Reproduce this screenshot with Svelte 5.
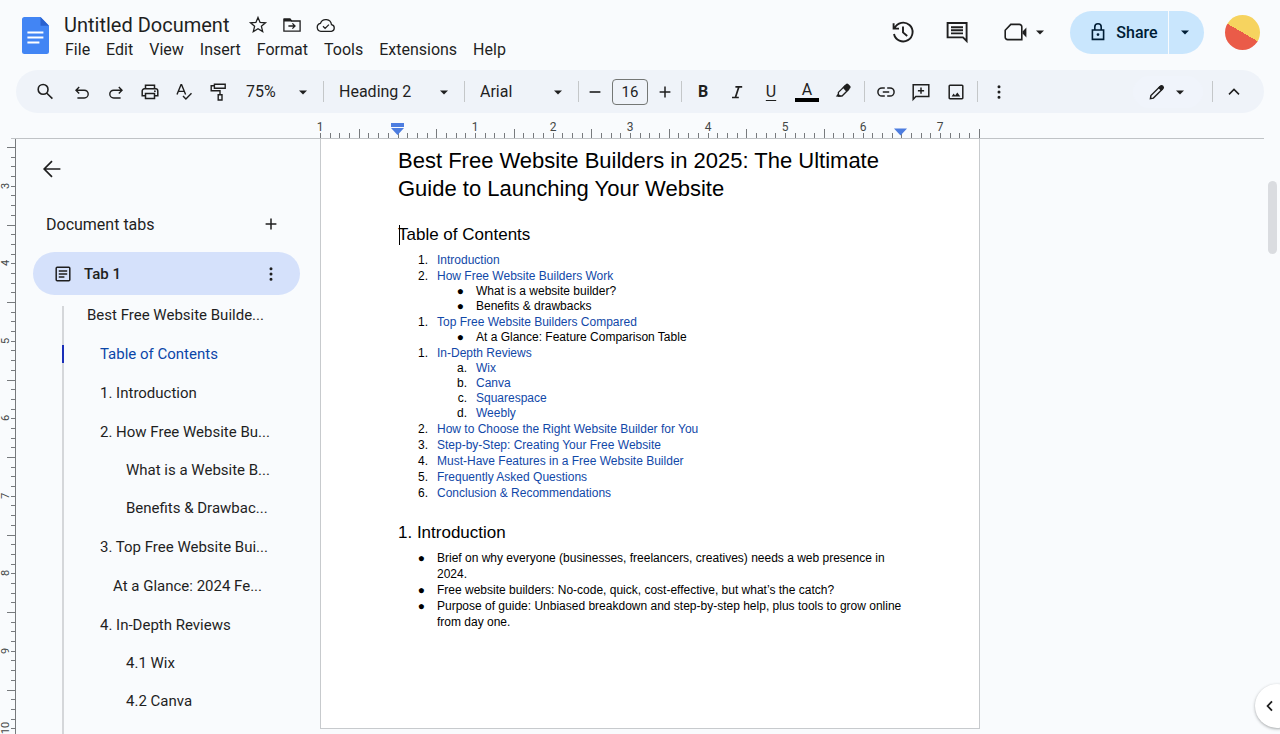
<script>
	let title = $state('Untitled Document');
	let fontSize = $state(16);
	let leftHeight = $state(600);

	const menus = ['File', 'Edit', 'View', 'Insert', 'Format', 'Tools', 'Extensions', 'Help'];

	// stroked and filled parts of each icon
	const icons = {
		star: { size: 20, line: 'M10 2.4l2.1 5 5.4.4-4.1 3.5 1.3 5.3L10 13.8l-4.7 2.8 1.3-5.3-4.1-3.5 5.4-.4z', width: 1.3 },
		move: { size: 20, line: 'M1.9 4.2v12h16.2V6H9.7L8 4.2zM6.4 11h6.4M10.4 8.4l2.6 2.6-2.6 2.6', fill: 'M1.9 3.6h6.4L10 6.4H1.9z', width: 1.3 },
		cloud: { size: 20, line: 'M5 16.4a4.1 4.1 0 0 1-.5-8.1 5.7 5.7 0 0 1 11 1.4 3.4 3.4 0 0 1-.1 6.7zM7 11.3l2.1 2.1 3.8-3.8', width: 1.3 },
		history: { size: 24, line: 'M3.6 8.2A9.4 9.4 0 1 1 3 14M2.6 3.2v5.4H8M12 6.6v5.8l4.2 3.6', width: 1.9 },
		comment: { size: 24, line: 'M2.6 3h19v18l-3.6-3.6H2.6zM6 7.2h12M6 10.3h12M6 13.4h12', width: 1.9 },
		video: { size: 24, line: 'M7.8 4.4h8.6a2.4 2.4 0 0 1 2.4 2.4v12.8H4.6a2.4 2.4 0 0 1-2.4-2.4v-7z', fill: 'M19.6 11.4l3.8-4v10l-3.8-4z', width: 1.6 },
		lock: { size: 20, line: 'M4.4 8h11.2v9.4H4.4zM6.8 8V5a3.2 3.2 0 0 1 6.4 0v3', fill: 'M8.6 12.6a1.4 1.4 0 1 0 2.800 0a1.400 1.400 0 1 0-2.800 0', width: 1.6 },
		search: { size: 20, line: 'M3.2 7.4a4.9 4.9 0 1 0 9.8 0a4.9 4.9 0 1 0-9.8 0M11.6 11l5.8 5.6', width: 1.6 },
		undo: { size: 20, line: 'M7.2 5L4 8.2l3.2 3.2M4.3 8.2h8a3.9 3.9 0 0 1 0 7.8H5.4', width: 1.4 },
		redo: { size: 20, line: 'M12.8 5L16 8.2l-3.2 3.2M15.7 8.2h-8a3.9 3.9 0 0 0 0 7.8h6.9', width: 1.4 },
		print: { size: 20, line: 'M5.5 6.8V3.2h9v3.6M5.5 13.8H2.2V9a2.2 2.2 0 0 1 2.2-2.2h11.2A2.2 2.2 0 0 1 17.8 9v4.8h-3.3M5.5 11.4h9v5.2h-9z', fill: 'M14 9.2a.9.9 0 1 0 1.8 0a.9.9 0 1 0-1.8 0' },
		spell: { size: 20, line: 'M3 12.4L7 2.8h.6l4 9.6M4.4 9.4h5.8M9 14l2.9 3 5.6-5.7', width: 1.4 },
		paint: { size: 20, line: 'M6.4 2.2h10.8v4H6.4zM6.4 3.8H3.2v5h8.8v4M10.2 12.8h3.8v5.2h-3.8z', width: 1.4 },
		minus: { size: 20, line: 'M4.6 10h10.8', width: 1.6 },
		plus: { size: 20, line: 'M4.6 10h10.8M10 4.6v10.8' },
		italic: { size: 20, line: 'M8.4 4.9h6.8M5 15.5h6.8M11.8 4.9L8.4 15.5', width: 1.7 },
		pen: { size: 20, line: 'M5.4 10.4l6.6-6.6 3.6 3.6-6.6 6.6H5.4z', fill: 'M9.6 5.6L13 2a1.6 1.6 0 0 1 2.2 0l2 2a1.6 1.6 0 0 1 0 2.2l-3.8 3.6zM2.8 14.600l2.400-3.200 2.800 2.800-.6.6z', width: 1.3 },
		link: { size: 20, line: 'M8.8 5.9H6a4.1 4.1 0 0 0 0 8.2h2.8M11.2 5.9H14a4.1 4.1 0 0 1 0 8.2h-2.8M6.8 10h6.4' },
		addComment: { size: 20, line: 'M2.2 17.4V2.8h15.6v11.8H4.8zM10 5.6v6.2M6.9 8.7h6.2' },
		image: { size: 20, line: 'M4 3.2h12a.8.8 0 0 1 .8.8v12a.8.8 0 0 1-.8.8H4a.8.8 0 0 1-.8-.8V4a.8.8 0 0 1 .8-.8z', fill: 'M5.6 14.4l2-2.8 1.5 1.8 2.2-3 3 4z' },
		dots: { size: 20, fill: 'M8.5 4.800a1.500 1.500 0 1 0 3 0a1.500 1.500 0 1 0-3 0M8.500 10a1.500 1.500 0 1 0 3 0a1.500 1.500 0 1 0-3 0M8.500 15.200a1.500 1.500 0 1 0 3 0a1.500 1.500 0 1 0-3 0' },
		pencil: { size: 20, line: 'M3.4 16.6l.5-3L13 4.5a1.8 1.8 0 0 1 2.5 2.5l-9.1 9.1z', fill: 'M11 5.8l2-2.1a2.3 2.3 0 0 1 3.3 3.3l-2.1 2z', width: 1.4 },
		up: { size: 20, line: 'M5 12.4l5-5 5 5' },
		left: { size: 20, line: 'M12 5.4L7.6 10l4.4 4.6', width: 1.8 },
		back: { size: 20, line: 'M18.4 10H2.4M10 2.2L2.2 10l7.8 7.8', width: 1.7 },
		doc: { size: 20, line: 'M4.2 3.2h11.6a1 1 0 0 1 1 1v11.6a1 1 0 0 1-1 1H4.2a1 1 0 0 1-1-1V4.2a1 1 0 0 1 1-1zM5.8 7h8.4M5.8 10h8.4M5.8 13h5.6' },
		caret: { size: 10, fill: 'M1 3.5h8L5 7.5z' }
	};

	const outline = [
		{ text: 'Best Free Website Builde...', level: 0 },
		{ text: 'Table of Contents', level: 1, active: true },
		{ text: '1. Introduction', level: 1 },
		{ text: '2. How Free Website Bu...', level: 1 },
		{ text: 'What is a Website B...', level: 3 },
		{ text: 'Benefits & Drawbac...', level: 3 },
		{ text: '3. Top Free Website Bui...', level: 1 },
		{ text: 'At a Glance: 2024 Fe...', level: 2 },
		{ text: '4. In-Depth Reviews', level: 1 },
		{ text: '4.1 Wix', level: 3 },
		{ text: '4.2 Canva', level: 3 }
	];

	const contents = [
		{ mark: '1.', text: 'Introduction' },
		{ mark: '2.', text: 'How Free Website Builders Work', plain: ['What is a website builder?', 'Benefits & drawbacks'] },
		{ mark: '1.', text: 'Top Free Website Builders Compared', plain: ['At a Glance: Feature Comparison Table'] },
		{ mark: '1.', text: 'In-Depth Reviews', links: ['Wix', 'Canva', 'Squarespace', 'Weebly'] },
		{ mark: '2.', text: 'How to Choose the Right Website Builder for You' },
		{ mark: '3.', text: 'Step-by-Step: Creating Your Free Website' },
		{ mark: '4.', text: 'Must-Have Features in a Free Website Builder' },
		{ mark: '5.', text: 'Frequently Asked Questions' },
		{ mark: '6.', text: 'Conclusion & Recommendations' }
	];

	const intro = [
		'Brief on why everyone (businesses, freelancers, creatives) needs a web presence in 2024.',
		'Free website builders: No-code, quick, cost-effective, but what’s the catch?',
		'Purpose of guide: Unbiased breakdown and step-by-step help, plus tools to grow online from day one.'
	];

	// rulers: eight ticks to the inch, the half inch is taller
	const INCH = 77.5;
	const across = Array.from({ length: 69 }, (_, i) => ({
		at: Math.round((i * INCH) / 8),
		long: i % 8 === 4,
		label: i % 8 === 0 && i !== 8 ? Math.abs(i / 8 - 1) : ''
	}));
	const down = $derived(
		Array.from({ length: Math.ceil((leftHeight * 8) / INCH) }, (_, i) => ({
			at: Math.round(9 + (i * INCH) / 8),
			long: i % 8 === 0,
			label: i % 8 === 4 ? 3 + (i - 4) / 8 : ''
		}))
	);
</script>

{#snippet icon(name)}
	{@const i = icons[name]}
	<svg width={i.size} height={i.size} viewBox="0 0 {i.size} {i.size}" aria-hidden="true">
		{#if i.line}<path d={i.line} fill="none" stroke="currentColor" stroke-width={i.width ?? 1.5} />{/if}
		{#if i.fill}<path d={i.fill} fill="currentColor" />{/if}
	</svg>
{/snippet}

{#snippet tool(name, label)}
	<button class="tool" aria-label={label}>{@render icon(name)}</button>
{/snippet}

<div class="app">
	<header>
		<svg class="logo" width="27" height="37" viewBox="0 0 27 37" aria-hidden="true">
			<path d="M2.5 0H18.5L27 8.8v25.7a2.5 2.5 0 0 1-2.5 2.5h-22A2.5 2.5 0 0 1 0 34.5v-32A2.5 2.5 0 0 1 2.5 0z" fill="#4285f4" />
			<path d="M18.5 0v8.8H27z" fill="#2a62d0" />
			<path d="M5.4 15.4h16M5.4 20.4h16M5.4 25.4h12" stroke="#fff" stroke-width="2" />
		</svg>
		<div class="heading">
			<div class="title-row">
				<input class="title" aria-label="Rename" bind:value={title} />
				<button aria-label="Star">{@render icon('star')}</button>
				<button aria-label="Move">{@render icon('move')}</button>
				<button aria-label="See document status">{@render icon('cloud')}</button>
			</div>
			<nav class="menus">
				{#each menus as menu}
					<button>{menu}</button>
				{/each}
			</nav>
		</div>
		<div class="actions">
			<button class="action" aria-label="Version history">{@render icon('history')}</button>
			<button class="action" aria-label="Comments">{@render icon('comment')}</button>
			<button class="meet" aria-label="Join a call">{@render icon('video')}{@render icon('caret')}</button>
			<div class="share">
				<button class="share-main">{@render icon('lock')}Share</button>
				<button class="share-more" aria-label="Share options">{@render icon('caret')}</button>
			</div>
			<button class="avatar" aria-label="Account"></button>
		</div>
	</header>

	<div class="toolbar" role="toolbar" aria-label="Formatting">
		<div class="group search">{@render tool('search', 'Search the menus')}</div>
		<div class="group">
			{@render tool('undo', 'Undo')}
			{@render tool('redo', 'Redo')}
			{@render tool('print', 'Print')}
			{@render tool('spell', 'Spelling and grammar check')}
			{@render tool('paint', 'Paint format')}
		</div>
		<label class="select zoom">
			<select aria-label="Zoom"><option>75%</option><option>100%</option></select>
			{@render icon('caret')}
		</label>
		<span class="divider"></span>
		<label class="select styles">
			<select aria-label="Styles"><option>Heading 2</option><option>Normal text</option></select>
			{@render icon('caret')}
		</label>
		<span class="divider"></span>
		<label class="select fonts">
			<select aria-label="Font"><option>Arial</option><option>Roboto</option></select>
			{@render icon('caret')}
		</label>
		<span class="divider"></span>
		<div class="group size">
			<button aria-label="Decrease font size" onclick={() => fontSize--}>{@render icon('minus')}</button>
			<input aria-label="Font size" bind:value={fontSize} />
			<button aria-label="Increase font size" onclick={() => fontSize++}>{@render icon('plus')}</button>
		</div>
		<span class="divider"></span>
		<div class="group">
			<button class="tool bold" aria-label="Bold">B</button>
			{@render tool('italic', 'Italic')}
			<button class="tool underline" aria-label="Underline">U</button>
			<button class="tool color" aria-label="Text color"><span>A</span></button>
			{@render tool('pen', 'Highlight color')}
		</div>
		<span class="divider"></span>
		<div class="group spaced">
			{@render tool('link', 'Insert link')}
			{@render tool('addComment', 'Add comment')}
			{@render tool('image', 'Insert image')}
		</div>
		<span class="divider"></span>
		{@render tool('dots', 'More')}
		<button class="mode" aria-label="Editing mode">{@render icon('pencil')}{@render icon('caret')}</button>
		<span class="divider"></span>
		{@render tool('up', 'Hide the menus')}
	</div>

	<div class="ruler columns">
		<svg class="across" width="660" height="25" aria-hidden="true">
			{#each across as tick}
				<path d="M{tick.at + 0.5} {tick.long ? 16 : 20}V25" stroke="#777a7d" />
				<text x={tick.at} y="18" text-anchor="middle">{tick.label}</text>
			{/each}
			<path d="M71 10h13v4H71zM71 15h13l-6.5 7z" fill="#4d7de0" />
			<path d="M574 15.5h13l-6.5 7z" fill="#4d7de0" />
		</svg>
	</div>

	<main class="columns">
		<div class="left" bind:clientHeight={leftHeight}>
			<svg class="down" width="16" height="100%" aria-hidden="true">
				{#each down as tick}
					<path d="M{tick.long ? 7 : 11} {tick.at - 0.5}H15" stroke="#777a7d" />
					{#if tick.label}
						<text transform="translate(9 {tick.at - 1}) rotate(-90)" text-anchor="middle">{tick.label}</text>
					{/if}
				{/each}
				<path d="M15.5 0V{leftHeight}" stroke="#777a7d" />
			</svg>
			<aside>
				<button class="back" aria-label="Close tabs and outlines">{@render icon('back')}</button>
				<div class="tabs-head">
					<h2>Document tabs</h2>
					<button aria-label="Add tab">{@render icon('plus')}</button>
				</div>
				<div class="tab">
					<button class="tab-name">{@render icon('doc')}Tab 1</button>
					<button aria-label="Tab options">{@render icon('dots')}</button>
				</div>
				<ul class="outline">
					{#each outline as item}
						<li class="level-{item.level}" class:active={item.active}><a href="#doc">{item.text}</a></li>
					{/each}
				</ul>
			</aside>
		</div>

		<article class="page" id="doc">
			<h1>Best Free Website Builders in 2025: The Ultimate Guide to Launching Your Website</h1>
			<h2 class="cursor">Table of Contents</h2>
			<ul class="list">
				{#each contents as item}
					<li>
						<span class="mark">{item.mark}</span>
						<a href="#doc">{item.text}</a>
						{#if item.plain}
							<ul>
								{#each item.plain as text}
									<li><span class="mark dot">●</span><span>{text}</span></li>
								{/each}
							</ul>
						{/if}
						{#if item.links}
							<ul>
								{#each item.links as text, n}
									<li><span class="mark">{'abcd'[n]}.</span><a href="#doc">{text}</a></li>
								{/each}
							</ul>
						{/if}
					</li>
				{/each}
			</ul>
			<h2>1. Introduction</h2>
			<ul class="list">
				{#each intro as text}
					<li><span class="mark dot">●</span><span>{text}</span></li>
				{/each}
			</ul>
		</article>
	</main>

	<div class="scrollbar"></div>
	<button class="side-panel" aria-label="Show side panel">{@render icon('left')}</button>
</div>

<style>
	:global(body) {
		background: #f9fbfd;
	}

	.app {
		position: relative;
		display: flex;
		flex-direction: column;
		height: 100vh;
		overflow: hidden;
		font-family: Roboto, sans-serif;
		font-size: 16px;
		color: #1f1f1f;
	}

	button, input, select {
		font: inherit;
		color: inherit;
		background: none;
		border: 0;
		padding: 0;
		margin: 0;
	}

	button {
		display: flex;
		align-items: center;
		justify-content: center;
		cursor: pointer;
	}

	svg {
		display: block;
		flex: none;
	}

	ul {
		list-style: none;
		margin: 0;
		padding: 0;
	}

	h1, h2 {
		margin: 0;
		font-weight: 400;
	}

	a {
		color: inherit;
		text-decoration: none;
	}

	header {
		display: flex;
		align-items: flex-start;
		height: 70px;
		padding: 0 20px 0 22px;
		box-sizing: border-box;
	}

	.logo {
		margin-top: 17px;
	}

	.heading {
		margin: 12px 0 0 8px;
	}

	.title-row {
		display: flex;
		align-items: center;
		gap: 14px;
		height: 25px;
		padding-left: 7px;
	}

	.title {
		width: 170px;
		font-size: 20px;
	}

	.menus {
		display: flex;
		height: 24px;
	}

	.menus button {
		padding: 0 8px;
	}

	.actions {
		display: flex;
		align-items: center;
		margin: 10px 0 0 auto;
		height: 44px;
	}

	.action {
		width: 54px;
		height: 40px;
	}

	.meet {
		gap: 8px;
		width: 86px;
		height: 40px;
		padding-right: 6px;
		box-sizing: border-box;
	}

	.share {
		display: flex;
		gap: 1px;
		height: 43px;
		margin-right: 21px;
		font-weight: 500;
		color: #001d35;
	}

	.share button {
		background: #c9e6fd;
	}

	.share-main {
		gap: 8px;
		width: 98px;
		padding: 0 0 0 8px;
		border-radius: 22px 0 0 22px;
	}

	.share-more {
		width: 35px;
		padding-right: 3px;
		box-sizing: border-box;
		border-radius: 0 22px 22px 0;
	}

	.avatar {
		width: 35px;
		height: 35px;
		border-radius: 50%;
		background: linear-gradient(210deg, #f6d35f 50%, #ea5b48 50%);
	}

	.toolbar {
		display: flex;
		align-items: center;
		height: 43px;
		margin: 0 16px;
		padding: 0 13px 0 12px;
		border-radius: 22px;
		background: #eff3f9;
	}

	.group {
		display: flex;
		align-items: center;
	}

	.spaced {
		gap: 1px;
	}

	.search {
		margin-right: 3px;
	}

	.tool {
		width: 34px;
		height: 34px;
	}

	.divider {
		width: 1px;
		height: 21px;
		margin: 0 4px;
		background: #c4c7c9;
	}

	.select {
		position: relative;
		display: flex;
		align-items: center;
	}

	.select select {
		appearance: none;
		width: 100%;
		height: 30px;
		padding-left: 11px;
	}

	.select :global(svg) {
		position: absolute;
		right: 11px;
		pointer-events: none;
	}

	.zoom {
		width: 84px;
	}

	.styles {
		width: 132px;
	}

	.fonts {
		width: 105px;
	}

	.size {
		gap: 5px;
	}

	.size button {
		width: 24px;
		height: 30px;
	}

	.size input {
		width: 36px;
		height: 26px;
		box-sizing: border-box;
		border: 1px solid #747775;
		border-radius: 4px;
		text-align: center;
		font-size: 15px;
	}

	.bold {
		font-weight: 700;
	}

	.underline {
		text-decoration: underline;
		text-underline-offset: 3px;
	}

	.color {
		width: 38px;
	}

	.color span {
		width: 24px;
		line-height: 17px;
		border-bottom: 4px solid #000;
	}

	.mode {
		gap: 8px;
		width: 70px;
		height: 32px;
		margin: 0 5px 0 auto;
		padding-right: 4px;
		box-sizing: border-box;
		border-radius: 16px;
		background: #f0f4fb;
	}

	.columns {
		display: grid;
		grid-template-columns: minmax(320px, 1fr) 660px minmax(0, 1fr);
	}

	.ruler {
		margin: 0 16px 0 11px;
		border-bottom: 1px solid #c0c3c6;
		grid-template-columns: minmax(309px, 1fr) 660px minmax(0, 1fr);
	}

	.across {
		grid-column: 2;
		overflow: visible;
	}

	.across text,
	.down text {
		font-size: 12px;
		fill: #444746;
	}

	.down text {
		font-size: 11px;
	}

	main {
		flex: 1;
		min-height: 0;
	}

	.left {
		display: flex;
		min-height: 0;
		overflow: hidden;
	}

	aside {
		display: flex;
		flex-direction: column;
		width: 267px;
		padding: 10px 0 0 17px;
	}

	.back {
		width: 38px;
		height: 40px;
	}

	.tabs-head {
		display: flex;
		align-items: center;
		justify-content: space-between;
		height: 40px;
		margin-top: 15px;
		padding: 0 19px 0 13px;
	}

	.tabs-head h2 {
		font-size: 16px;
	}

	.tab {
		display: flex;
		flex: none;
		align-items: center;
		justify-content: space-between;
		height: 43px;
		margin-top: 8px;
		padding: 0 19px 0 20px;
		border-radius: 22px;
		background: #d5e1fb;
	}

	.tab-name {
		gap: 11px;
		font-size: 15px;
		font-weight: 500;
	}

	.outline {
		flex: 1;
		margin: 0 0 0 29px;
		font-size: 15px;
		background: linear-gradient(#d5d7da, #d5d7da) 0 11px / 2px 100% no-repeat;
	}

	.outline li {
		display: flex;
		align-items: center;
		height: 39px;
	}

	.outline a {
		line-height: 18px;
		border-left: 2px solid transparent;
	}

	.outline .active a {
		border-color: #1a2fb8;
		color: #0b46a8;
	}

	.level-0 a { padding-left: 23px; }
	.level-1 a { padding-left: 36px; }
	.level-2 a { padding-left: 49px; }
	.level-3 a { padding-left: 62px; }

	.outline .level-3 {
		height: 38px;
	}

	.page {
		align-self: start;
		box-sizing: border-box;
		padding: 8px 77px 98px;
		border: 1px solid #c7cacd;
		border-top: 0;
		background: #fff;
		color: #000;
		font-family: Arial, "Liberation Sans", sans-serif;
		font-size: 12px;
		line-height: 16px;
	}

	.page h1 {
		font-size: 22px;
		line-height: 28px;
	}

	.page h2 {
		margin: 21px 0 6px;
		font-size: 17px;
		line-height: 22px;
	}

	.cursor {
		position: relative;
	}

	.cursor::before {
		content: '';
		position: absolute;
		left: 1px;
		top: 1px;
		width: 1px;
		height: 20px;
		background: #000;
	}

	.list li {
		display: grid;
		grid-template-columns: 39px 1fr;
	}

	.list a {
		color: #1148a8;
	}

	.list ul {
		grid-column: 2;
		line-height: 15px;
	}

	.mark {
		padding-right: 9px;
		text-align: right;
	}

	.dot {
		padding-right: 12px;
	}

	.scrollbar {
		position: absolute;
		top: 181px;
		right: 3px;
		width: 9px;
		height: 73px;
		border-radius: 5px;
		background: #dadce0;
	}

	.side-panel {
		position: absolute;
		right: -19px;
		bottom: 6px;
		width: 44px;
		height: 44px;
		padding-right: 14px;
		border-radius: 50%;
		background: #fff;
		box-shadow: 0 1px 3px rgba(60, 64, 67, 0.45);
	}
</style>
